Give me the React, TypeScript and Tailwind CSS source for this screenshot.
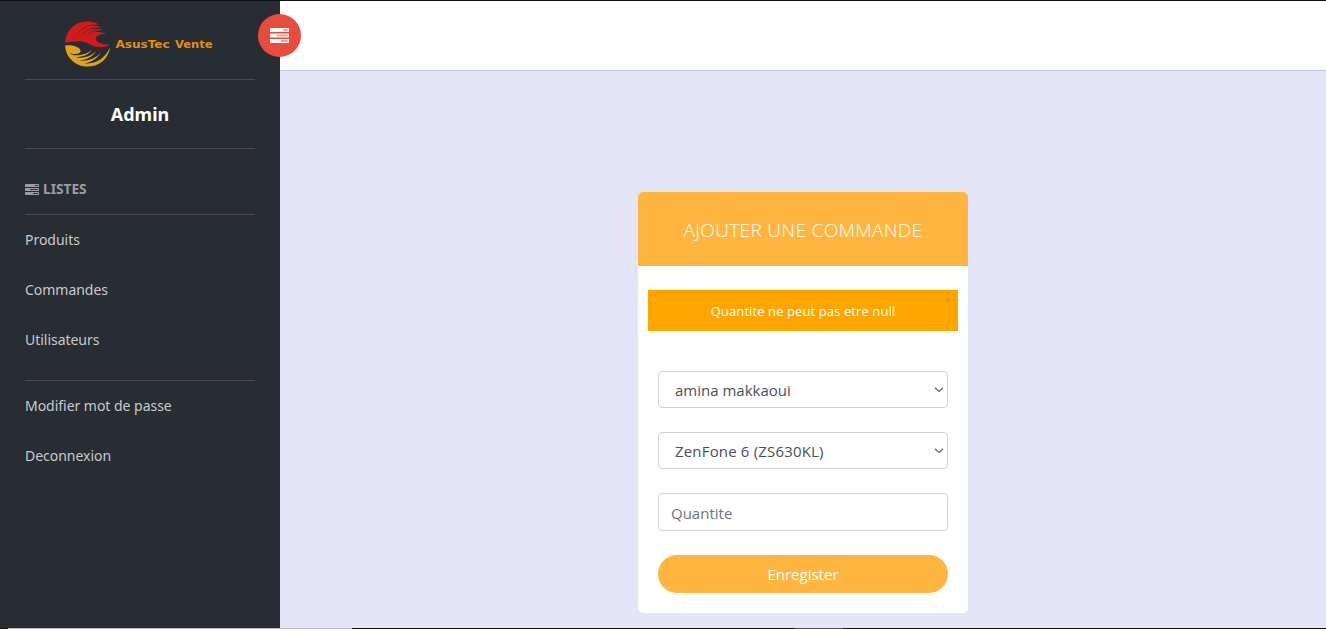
import type { ReactNode } from 'react';

function TasksIcon({ className, slot = '' }: { className: string; slot?: string }) {
  return (
    <svg viewBox="0 128 1792 1408" className={className} fill="currentColor" fillRule="evenodd" preserveAspectRatio="none" aria-hidden="true">
      <path className={slot} d="M1280 256h384v128h-384zM640 768h1024v128H640zM1024 1280h640v128h-640z" />
      <path d="M64 128h1664q64 0 64 64v256q0 64-64 64H64q-64 0-64-64V192q0-64 64-64zM1280 256v128h384V256z" />
      <path d="M64 640h1664q64 0 64 64v256q0 64-64 64H64q-64 0-64-64V704q0-64 64-64zM640 768v128h1024V768z" />
      <path d="M64 1152h1664q64 0 64 64v256q0 64-64 64H64q-64 0-64-64v-256q0-64 64-64zM1024 1280v128h640v-128z" />
    </svg>
  );
}

function Emblem() {
  return (
    <svg viewBox="0 0 46 46" className="h-[46px] w-[46px] shrink-0" aria-hidden="true">
      <path
        fill="#d31b1b"
        d="M0.2 22C1 9 10 0.5 22 0.5C27 0.5 31 1.500 34 3.500C31 3.300 28 3.800 25 5C29 4.500 33 4.800 36.500 6.500C32 6.300 28 7 25 8.700C29 7.500 34 7.500 38.500 9C34 8.800 31 9.800 28.500 11.300C33 10.800 37 11.300 41.500 13C35 12.500 30.500 14.500 31 18C31.500 22 37 23.500 45 23.500C42 26 38 26.500 34 26C26 25.500 22 20.500 15 20.200C10 20 5 20.800 0.2 22Z"
      />
      <path fill="#dfa321" d="M0.2 24.500C4 24 9 24.300 13 26.500C16.500 28.500 16.500 32 12.500 32.800C9.500 33.400 6.500 32.800 4.500 32.500C7 34 11 34.700 15 34C20 33.200 24 31.500 27 29C24 33.500 18 36 11 36.200C17 37.800 25 36 31 30.500C27 36.500 21 39 14.500 39.500C22 40.500 30 38 36 31.500C32 38 26 41.500 19 42.500C30 43.500 40 38 45.200 26C43.500 38 34 45.600 23 45.600C10 45.600 0.500 36 0.200 24.500Z" />
      <path fill="none" stroke="#282c33" strokeWidth=".6" d="M13 12Q18 6 28 3.500M17 13.500Q21 9 30 6M22 14Q25 10.500 33 8" />
    </svg>
  );
}

function MenuLink({ children }: { children: ReactNode }) {
  return (
    <a href="#" className="flex h-[50px] items-center text-[14px] leading-5 tracking-[-0.03px] text-[#c9cacc]">
      {children}
    </a>
  );
}

function SelectBox({ value, className }: { value: string; className: string }) {
  return (
    <button type="button" className="flex h-[37px] w-full items-center justify-between rounded-[4px] border border-[#ced4da] bg-white pr-[3px] pl-4 text-left text-[15px] text-[#495057]">
      <span className={className}>{value}</span>
      <svg viewBox="0 0 10 6" className="h-[6px] w-[10px]" fill="none" stroke="#6b6b6b" strokeWidth="1.4" aria-hidden="true">
        <path d="M1 .8 5 4.400 9 .8" />
      </svg>
    </button>
  );
}

export default function App() {
  return (
    <div className="flex h-[629px] w-[1326px] flex-col overflow-hidden bg-[#e5e5f9] font-['Noto_Sans',sans-serif]">
      <div className="h-px shrink-0 bg-[#111116]" />
      <div className="flex h-[627px]">
        <aside className="relative w-[280px] shrink-0 bg-[#282c33] px-[25px]">
          <div className="flex h-[79px] items-center border-b border-[#4d4c4d] pt-[8px] pl-10">
            <Emblem />
            <svg viewBox="0 0 100 16" className="ml-1 h-4 w-[100px]" fill="#e68f0c" role="img">
              <text x="0.5" y="12" textLength="54" lengthAdjust="spacingAndGlyphs" className="font-['DejaVu_Sans',sans-serif] text-[10px] font-bold">
                AsusTec
              </text>
              <text x="60" y="12" textLength="37.500" lengthAdjust="spacingAndGlyphs" className="font-['DejaVu_Sans',sans-serif] text-[10px] font-bold">
                Vente
              </text>
            </svg>
          </div>
          <h2 className="flex h-[69px] items-center justify-center border-b border-[#4d4c4d] text-[18px] font-bold text-white">Admin</h2>
          <div className="flex h-[66px] items-center border-b border-[#4d4c4d] pt-[15px] text-[13.7px] font-bold text-[#9c9ca8]">
            <TasksIcon className="mr-1 h-[11px] w-[14px]" slot="opacity-10" />
            LISTES
          </div>
          <nav className="h-[166px] border-b border-[#4d4c4d]">
            <MenuLink>Produits</MenuLink>
            <MenuLink>Commandes</MenuLink>
            <MenuLink>Utilisateurs</MenuLink>
          </nav>
          <nav>
            <MenuLink>Modifier mot de passe</MenuLink>
            <MenuLink>Deconnexion</MenuLink>
          </nav>
          <button type="button" className="absolute top-[13px] right-[-21px] z-10 flex size-[43px] items-center justify-center rounded-full bg-[#e74c3c] text-white">
            <TasksIcon className="h-[15px] w-[19px]" slot="opacity-40" />
          </button>
        </aside>
        <div className="flex flex-1 flex-col">
          <header className="h-[70px] shrink-0 border-b border-[#c8c8dc] bg-white" />
          <main className="flex justify-center pt-[121px] font-['Open_Sans',sans-serif]">
            <section className="h-[421px] w-[330px] overflow-hidden rounded-[5px] bg-white">
              <h1 className="flex h-[74px] items-center justify-center bg-[#ffb641] pt-[2px] text-[19px] font-light tracking-[0.35px] whitespace-nowrap text-white">
                AJOUTER UNE COMMANDE
              </h1>
              <div className="mx-[10px] mt-6 flex h-[41px] items-center justify-center bg-[orange] pt-[3px] text-[13px] tracking-[0.1px] whitespace-nowrap text-white">
                Quantite ne peut pas etre null
              </div>
              <form className="mt-10 flex flex-col gap-6 px-5">
                <SelectBox value="amina makkaoui" className="pt-px whitespace-nowrap" />
                <SelectBox value="ZenFone 6 (ZS630KL)" className="pt-px tracking-[0.17px] whitespace-nowrap" />
                <input
                  placeholder="Quantite"
                  className="h-[38px] w-full rounded-[4px] border border-[#ced4da] bg-white px-3 pt-px text-[15px] text-[#495057] placeholder:text-[#6c757d]"
                />
                <button type="button" className="h-[38px] w-full rounded-full bg-[#ffb641] pt-px text-[15px] text-white">
                  Enregister
                </button>
              </form>
            </section>
          </main>
        </div>
      </div>
      <div className="flex h-px shrink-0 bg-[#111116]">
        <div className="ml-2 w-[344px] bg-[#b8babb]" />
        <div className="ml-[443px] w-12 bg-[#55515c]" />
      </div>
    </div>
  );
}
